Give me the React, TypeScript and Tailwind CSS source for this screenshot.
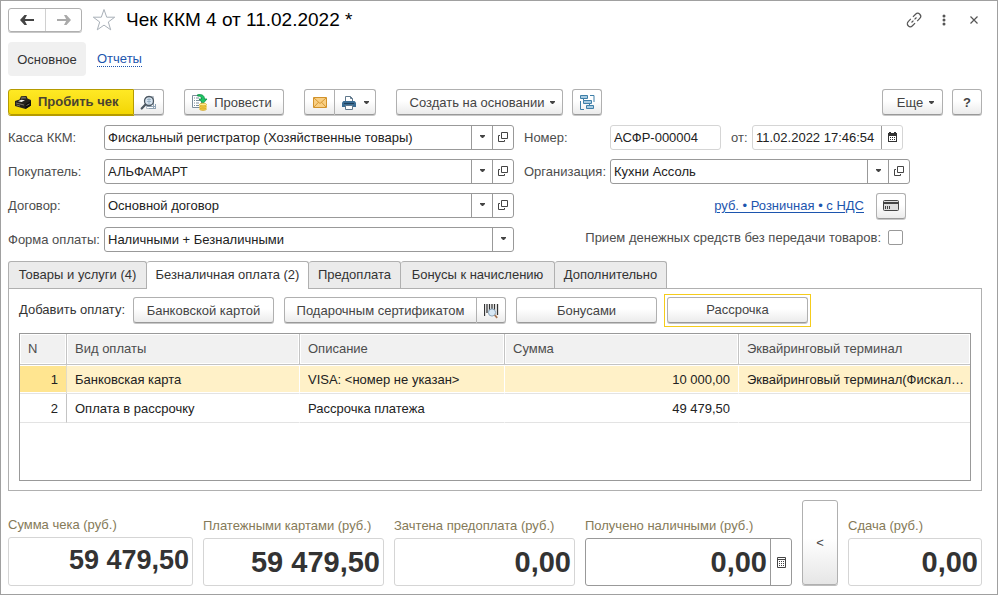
import type { ReactNode } from "react"
import { clsx } from "clsx"

const buttonStyle =
  "flex h-[26px] items-center justify-center rounded-[3px] border border-[#b0b0b0] border-b-[#999] bg-linear-to-b from-white from-45% to-[#ebebeb] pt-px text-[#444] shadow-[0_1px_0_#c8c8c8]"

const rows = [
  {
    n: 1,
    kind: "Банковская карта",
    description: "VISA: <номер не указан>",
    sum: "10 000,00",
    terminal: "Эквайринговый терминал(Фискал…",
  },
  {
    n: 2,
    kind: "Оплата в рассрочку",
    description: "Рассрочка платежа",
    sum: "49 479,50",
    terminal: "",
  },
]

const tabs = [
  { title: "Товары и услуги (4)", width: "w-[139px]" },
  { title: "Безналичная оплата (2)", width: "w-[162px]" },
  { title: "Предоплата", width: "w-[92px]" },
  { title: "Бонусы к начислению", width: "w-[154px]" },
  { title: "Дополнительно", width: "w-[112px]" },
]

function Caret() {
  return (
    <svg width="5" height="3" viewBox="0 0 5 3" fill="#444" aria-hidden="true">
      <path d="M0 0h5v1L3 3H2L0 1z" />
    </svg>
  )
}

function OpenIcon() {
  return (
    <svg width="10" height="10" viewBox="0 0 10 10" fill="none" stroke="#444" aria-hidden="true">
      <path d="M3.500.5h6v6h-6zM2 3.500H.5v6h6V8" />
    </svg>
  )
}

function ArrowIcon({ color, flip }: { color: string; flip?: boolean }) {
  return (
    <svg
      className={clsx(flip && "rotate-180")}
      width="14"
      height="10"
      viewBox="0 0 14 10"
      aria-hidden="true"
    >
      <path d="M4.500 0H7L4.900 3.900H14v2.200H4.900L7 10H4.500L0 5z" fill={color} />
    </svg>
  )
}

function StarIcon() {
  return (
    <svg width="24" height="24" viewBox="0 0 24 24" fill="none" stroke="#a9b0b8" aria-hidden="true">
      <path d="m12 1.500 2.700 7.700h8L16.300 14l2.400 7.800L12 17.100l-6.700 4.700L7.700 14 1.300 9.200h8z" />
    </svg>
  )
}

function LinkIcon() {
  return (
    <svg width="18" height="18" viewBox="0 0 18 18" fill="none" stroke="#555" strokeWidth="1.200" aria-hidden="true">
      <g transform="rotate(-45 9 9)">
        <path d="M7.500 6H3.800a3 3 0 0 0 0 6h3.700M10.500 6h3.700a3 3 0 0 1 0 6h-3.700M5.500 9h2.700M9.800 9h2.700" />
      </g>
    </svg>
  )
}

function RegisterIcon() {
  return (
    <svg width="16" height="13" viewBox="0 0 16 13" aria-hidden="true">
      <path d="m0 5 4.500-1.500L6 .3 11.500 0l1 2.500L16 4v5.500L10.500 13 0 10z" fill="#24221d" />
      <path d="m5.800 2.800.9-1.700 4-.2.5 1.500z" fill="#6d6a60" />
      <path d="m3 5.200 3.300-1.400 3.700.5-3.500 1.600z" fill="#f2f2ea" />
      <path d="m10.500 8 5.500-3v4.500L10.500 13z" fill="#0d0d0d" />
      <path d="m1 7 8 2M1.500 9l3.500 1M11.500 9.500l3-1.600" stroke="#8e8977" strokeWidth=".8" />
    </svg>
  )
}

function ReceiptSearchIcon() {
  return (
    <svg width="17" height="16" viewBox="0 0 17 16" fill="none" aria-hidden="true">
      <path d="M6.500 1.500h7v12h-7z" fill="#fff" stroke="#b4bdc6" />
      <path d="M7 11.500h8.500M9 13.500h6.500M13.500 8v6M15.500 9v5" stroke="#8fa2b3" />
      <circle cx="9" cy="6" r="4.500" fill="#d5e2ee" stroke="#4b5660" strokeWidth="1.300" />
      <path d="M7 4.500h4M7 6.500h4M9 3v6" stroke="#91a9bd" strokeWidth=".8" />
      <path d="m5.500 9.500-3.800 4" stroke="#4b5660" strokeWidth="2.200" strokeLinecap="round" />
    </svg>
  )
}

function PostIcon() {
  return (
    <svg width="16" height="17" viewBox="0 0 16 17" fill="none" aria-hidden="true">
      <path d="M.5 1.500h9v12h-9z" fill="#fff" stroke="#7d8d9b" />
      <path d="M2 4h1M2 6.500h1M2 9h1M2 11.500h1M4 4h3M4 6.500h4M4 9h3M4 11.500h3" stroke="#7d8d9b" />
      <path d="M5.500.8c4-.8 7 .5 7 4.200H15l-4 4.500L7 5h2.500c0-2-1-3-4-3z" fill="#1fc566" stroke="#0c8e43" strokeWidth=".8" />
      <path d="M7.500 10.500v4.800c1.500 1.200 5 1.200 7 0v-4.800z" fill="#f6d352" />
      <ellipse cx="11" cy="10.500" rx="3.500" ry="1.300" fill="#ffec8f" stroke="#d0a41c" strokeWidth=".7" />
      <path d="M7.500 12.300c2 1.200 5 1.200 7 0M7.500 14c2 1.200 5 1.200 7 0M7.500 15.500c2 1.200 5 1.200 7 0" stroke="#d0a41c" strokeWidth=".8" />
    </svg>
  )
}

function MailIcon() {
  return (
    <svg width="14" height="11" viewBox="0 0 14 11" fill="none" aria-hidden="true">
      <path d="M.5.5h13v10H.5z" fill="#f9cf83" stroke="#d1922b" />
      <path d="m1 1 6 5.500L13 1M1 10l4.500-4.800M13 10 8.500 5.200" stroke="#d1922b" strokeWidth=".9" />
    </svg>
  )
}

function PrinterIcon() {
  return (
    <svg width="14" height="14" viewBox="0 0 14 14" fill="none" aria-hidden="true">
      <path d="M3.500 5V.5h5l2 2V5" fill="#fff" stroke="#60788c" />
      <path d="M8.500.5v2h2" stroke="#60788c" />
      <path d="M1.500 5h11L14 6.500V11H0V6.500z" fill="#3b6d94" />
      <path d="M2 7.500h10" stroke="#1d3f5c" />
      <path d="M3.500 9.500h7v4h-7z" fill="#fff" stroke="#60788c" />
    </svg>
  )
}

function StructureIcon() {
  return (
    <svg width="15" height="15" viewBox="0 0 15 15" fill="none" stroke="#3f7fa8" aria-hidden="true">
      <path d="M.5.5h7v3h-7zM3.500 5.500h8v3h-8zM6.500 10.500h7v3h-7z" fill="#a9cce2" />
      <path d="M3.500 3.500v2M9.500 8.500v2M10 .5h4V7M.5 6v8.500H4" />
    </svg>
  )
}

function CalendarIcon() {
  return (
    <svg width="9" height="10" viewBox="0 0 9 10" aria-hidden="true">
      <path fill="#333" fillRule="evenodd" d="M0 1h1V0h2v1h3V0h2v1h1v9H0zM1 4v5h7V4z" />
      <path stroke="#333" d="M2 5.500h1m1 0h1m1 0h1M2 7.500h1m1 0h1m1 0h1" />
    </svg>
  )
}

function CalculatorIcon() {
  return (
    <svg width="9" height="11" viewBox="0 0 9 11" fill="none" stroke="#444" aria-hidden="true">
      <path d="M.5.5h8v10h-8zM0 2.500h9" />
      <path d="M2 4.500h1m1 0h1m1 0h1M2 6.500h1m1 0h1m1 0h1M2 8.500h1m1 0h1m1 0h1" />
    </svg>
  )
}

function CardIcon() {
  return (
    <svg width="16" height="12" viewBox="0 0 16 12" fill="none" aria-hidden="true">
      <rect x=".5" y=".5" width="15" height="10" rx="1" fill="#ddd" stroke="#444" />
      <path d="M1 3h14" stroke="#444" strokeWidth="2" />
      <path d="M2.500 6v3M4.500 6v3M6.500 6v3" stroke="#444" />
    </svg>
  )
}

function BarcodeIcon() {
  return (
    <svg width="15" height="16" viewBox="0 0 15 16" fill="none" aria-hidden="true">
      <path d="M.5 1v12M3 1v9M5.500 1v7M8 1v5M10.500 1v6M13.500 1v11" stroke="#333" strokeWidth="1.300" />
      <circle cx="8" cy="9.500" r="3.600" fill="#d8e8f5" stroke="#8ba5bb" />
      <path d="m10.700 12 2.500 2.800" stroke="#a77756" strokeWidth="1.800" />
    </svg>
  )
}

type ComboProps = {
  id: string
  label: string
  value: string
  open?: boolean
  wide?: boolean
}

function Combo({ id, label, value, open = true, wide }: ComboProps) {
  return (
    <div className="flex items-center">
      <label
        htmlFor={id}
        className={clsx("shrink-0 whitespace-nowrap", wide ? "w-24" : "w-[86px]")}
      >
        {label}
      </label>
      <div className="flex h-[25px] min-w-0 flex-1 rounded-[3px] border border-[#999]">
        <select id={id} className="min-w-0 flex-1 appearance-none bg-transparent pl-[3px] text-[#222] outline-none">
          <option>{value}</option>
        </select>
        <span className="pointer-events-none flex w-[21px] items-center justify-center border-l border-[#999] pb-0.5">
          <Caret />
        </span>
        {open ? (
          <button
            type="button"
            aria-label="Открыть"
            className="flex w-[21px] items-center justify-center border-l border-[#999] pb-0.5"
          >
            <OpenIcon />
          </button>
        ) : null}
      </div>
    </div>
  )
}

type TotalProps = {
  id: string
  label: string
  value: string
  className: string
  main?: boolean
  editable?: boolean
  children?: ReactNode
}

function Total({ id, label, value, className, main, editable, children }: TotalProps) {
  return (
    <div className={clsx("min-w-0", className)}>
      <label htmlFor={id} className="mb-1 block whitespace-nowrap text-[#857a58]">
        {label}
      </label>
      <div
        className={clsx(
          "flex rounded-[3px] border",
          main ? "h-[49px]" : "h-12",
          editable ? "border-[#999]" : "border-[#d5d5d5]"
        )}
      >
        <input
          id={id}
          className={clsx(
            "min-w-0 flex-1 bg-transparent pr-[3px] text-right font-bold text-[#333] outline-none",
            main ? "pb-0.5 text-[27px]" : "text-[29px]"
          )}
          defaultValue={value}
          readOnly={!editable}
        />
        {children}
      </div>
    </div>
  )
}

export default function App() {
  return (
    <main className="flex min-h-screen flex-col border border-[#a0a0a0] bg-white px-[7px] pt-1.5 pb-2 font-['Liberation_Sans',Arial,sans-serif] text-[13px] leading-4 text-[#4d4d4d]">
      <header className="flex h-[25px] items-center">
        <div className="flex h-6 rounded-[3px] border border-[#b0b0b0] shadow-[0_1px_0_#c8c8c8]">
          <button aria-label="Назад" className="flex w-9 items-center justify-center">
            <ArrowIcon color="#444" />
          </button>
          <button aria-label="Вперед" className="flex w-9 items-center justify-center border-l border-[#d0d0d0]">
            <ArrowIcon color="#aaa" flip />
          </button>
        </div>
        <button aria-label="В избранное" className="ml-2.5">
          <StarIcon />
        </button>
        <h1 className="ml-2.5 text-[19px] leading-6 text-black">Чек ККМ 4 от 11.02.2022 *</h1>
        <div className="mr-px ml-auto flex items-center">
          <button aria-label="Ссылка" className="flex w-[30px] justify-center">
            <LinkIcon />
          </button>
          <button aria-label="Меню" className="flex w-[30px] justify-center">
            <svg width="4" height="12" viewBox="0 0 4 12" fill="#555">
              <circle cx="2" cy="2" r="1.500" />
              <circle cx="2" cy="6" r="1.500" />
              <circle cx="2" cy="10" r="1.500" />
            </svg>
          </button>
          <button aria-label="Закрыть" className="flex w-[30px] justify-center">
            <svg width="8" height="8" viewBox="0 0 8 8" stroke="#555" strokeWidth="1.200">
              <path d="m.5.5 7 7m0-7-7 7" />
            </svg>
          </button>
        </div>
      </header>

      <nav className="mt-2.5 flex h-[34px] items-center">
        <a href="#main" className="flex h-full w-[78px] items-center justify-center rounded-[4px] bg-[#f0f0f0] pt-px text-[#333]">
          Основное
        </a>
        <a href="#reports" className="ml-[11px] border-b border-dotted border-[#1c55ae] leading-[14px] text-[#1c55ae]">
          Отчеты
        </a>
      </nav>

      <div className="mt-[13px] flex">
        <div className="flex">
          <button className="flex h-[26px] w-[126px] items-center rounded-l-[3px] border border-[#b59b00] bg-linear-to-b from-[#ffe924] to-[#f3d600] pl-1.5 font-bold text-[#4a4330] shadow-[0_1px_0_#b59b00]">
            <RegisterIcon />
            <span className="ml-[7px]">Пробить чек</span>
          </button>
          <button aria-label="Просмотр чека" className={clsx(buttonStyle, "w-[30px] rounded-l-none border-l-0")}>
            <ReceiptSearchIcon />
          </button>
        </div>
        <button className={clsx(buttonStyle, "ml-5 w-[100px] gap-1.5 pr-1")}>
          <PostIcon />
          Провести
        </button>
        <div className="ml-5 flex">
          <button aria-label="Отправить" className={clsx(buttonStyle, "w-[31px] rounded-r-none")}>
            <MailIcon />
          </button>
          <button aria-label="Печать" className={clsx(buttonStyle, "w-[41px] gap-2 rounded-l-none border-l-0")}>
            <PrinterIcon />
            <Caret />
          </button>
        </div>
        <button className={clsx(buttonStyle, "ml-5 w-[167px] gap-1.5 pl-1.5 whitespace-nowrap")}>
          Создать на основании
          <Caret />
        </button>
        <button aria-label="Структура подчиненности" className={clsx(buttonStyle, "ml-[9px] w-[30px]")}>
          <StructureIcon />
        </button>
        <div className="mr-2 ml-auto flex gap-[9px]">
          <button className={clsx(buttonStyle, "w-[61px] gap-1.5 pl-1.5")}>
            Еще
            <Caret />
          </button>
          <button aria-label="Справка" className={clsx(buttonStyle, "w-[30px] font-bold")}>
            ?
          </button>
        </div>
      </div>

      <form className="mt-2.5 mr-2 grid grid-cols-[506fr_458fr] gap-x-2.5">
        <div className="flex flex-col gap-[9px]">
          <Combo id="kkm" label="Касса ККМ:" value="Фискальный регистратор (Хозяйственные товары)" wide />
          <Combo id="buyer" label="Покупатель:" value="АЛЬФАМАРТ" wide />
          <Combo id="contract" label="Договор:" value="Основной договор" wide />
          <Combo id="payment" label="Форма оплаты:" value="Наличными + Безналичными" open={false} wide />
        </div>
        <div className="flex flex-col gap-[9px] pr-[72px]">
          <div className="flex h-[25px] items-center">
            <label htmlFor="number" className="w-[86px] shrink-0">
              Номер:
            </label>
            <input
              id="number"
              defaultValue="АСФР-000004"
              className="h-full w-[111px] rounded-[3px] border border-[#d5d5d5] pl-[3px] text-[#222] outline-none"
            />
            <label htmlFor="date" className="ml-2.5 w-[21px] shrink-0">
              от:
            </label>
            <div className="flex h-full w-[151px] rounded-[3px] border border-[#d5d5d5]">
              <input id="date" defaultValue="11.02.2022 17:46:54" className="min-w-0 flex-1 pl-[3px] text-[#222] outline-none" />
              <button
                type="button"
                aria-label="Выбрать дату"
                className="flex w-[21px] items-center justify-center border-l border-[#999] pb-0.5"
              >
                <CalendarIcon />
              </button>
            </div>
          </div>
          <Combo id="company" label="Организация:" value="Кухни Ассоль" />
          <div className="flex h-[25px] items-center justify-end pr-1">
            <a href="#prices" className="mr-3 text-[#1c55ae] underline underline-offset-2">
              руб. • Розничная • с НДС
            </a>
            <button type="button" aria-label="Карта" className={clsx(buttonStyle, "w-[30px]")}>
              <CardIcon />
            </button>
          </div>
          <div className="flex h-[21px] items-center justify-end gap-[7px] pr-[7px]">
            <label htmlFor="advance" className="whitespace-nowrap">
              Прием денежных средств без передачи товаров:
            </label>
            <input id="advance" type="checkbox" className="size-[15px] appearance-none rounded-[2px] border border-[#999]" />
          </div>
        </div>
      </form>

      <div role="tablist" className="mt-[9px] flex">
        {tabs.map((tab, i) => (
          <button
            key={tab.title}
            role="tab"
            aria-selected={i === 1}
            className={clsx(
              "rounded-t-[3px] border-t border-r border-[#b0b0b0] pb-px text-center whitespace-nowrap text-[#333]",
              tab.width,
              i === 0 && "border-l",
              i === 1 ? "z-10 -mb-px h-7 bg-white" : "h-[27px] bg-[#ebebeb]"
            )}
          >
            {tab.title}
          </button>
        ))}
      </div>

      <section className="mr-2 flex flex-1 flex-col border border-[#b0b0b0] px-2.5 pt-2 pb-[9px]">
        <div className="flex items-center">
          <span className="w-[114px] text-[#333]">Добавить оплату:</span>
          <button className={clsx(buttonStyle, "w-[141px]")}>Банковской картой</button>
          <button className={clsx(buttonStyle, "ml-2.5 w-[193px] rounded-r-none")}>Подарочным сертификатом</button>
          <button aria-label="Найти по штрихкоду" className={clsx(buttonStyle, "w-[29px] rounded-l-none border-l-0")}>
            <BarcodeIcon />
          </button>
          <button className={clsx(buttonStyle, "ml-2.5 w-[141px]")}>Бонусами</button>
          <div className="-my-1 ml-[7px] border border-[#f5cc1b] p-0.5 pb-[3px]">
            <button className={clsx(buttonStyle, "w-[141px]")}>Рассрочка</button>
          </div>
        </div>
        <div className="mt-2.5 min-h-[148px] flex-1 border border-[#999]">
          <table className="w-full table-fixed border-separate border-spacing-0 text-left">
            <colgroup>
              <col className="w-[47px]" />
              <col className="w-[233px]" />
              <col className="w-[205px]" />
              <col className="w-[234px]" />
              <col />
            </colgroup>
            <thead>
              <tr className="h-[31px]">
                {["N", "Вид оплаты", "Описание", "Сумма", "Эквайринговый терминал"].map((name) => (
                  <th
                    key={name}
                    className="border-r border-b border-[#c4c4c4] bg-[#f1f1f1] px-2 font-normal shadow-[inset_0_0_0_1px_#fff] last:border-r-0"
                  >
                    {name}
                  </th>
                ))}
              </tr>
            </thead>
            <tbody className="text-[#222]">
              {rows.map((row) => (
                <tr
                  key={row.n}
                  className={clsx(
                    "h-[29px] *:border-b *:border-b-[#e3e3e3] *:pt-px *:pl-2",
                    row.n === 1 && "bg-[#fff1c8] *:shadow-[inset_0_1px_0_#fff,inset_0_-1px_0_#fff]"
                  )}
                >
                  <td
                    className={clsx(
                      "border-r pr-2 text-right",
                      row.n === 1 ? "border-r-[#e2dcc8] bg-[#ffe590]" : "border-r-[#c4c4c4]"
                    )}
                  >
                    {row.n}
                  </td>
                  <td className="border-r border-r-white">{row.kind}</td>
                  <td className="border-r border-r-white">{row.description}</td>
                  <td className="border-r border-r-white pr-2 text-right">{row.sum}</td>
                  <td className="whitespace-nowrap">{row.terminal}</td>
                </tr>
              ))}
            </tbody>
          </table>
        </div>
      </section>

      <footer className="mt-[9px] mr-2 flex items-end gap-2.5">
        <Total id="total" label="Сумма чека (руб.)" value="59 479,50" className="flex-[185]" main />
        <Total id="cards" label="Платежными картами (руб.)" value="59 479,50" className="flex-[181]" />
        <Total id="prepaid" label="Зачтена предоплата (руб.)" value="0,00" className="flex-[181]" />
        <Total id="cash" label="Получено наличными (руб.)" value="0,00" className="flex-[207]" editable>
          <button aria-label="Калькулятор" className="flex w-[21px] items-center justify-center border-l border-[#999]">
            <CalculatorIcon />
          </button>
        </Total>
        <button
          aria-label="Перенести сумму"
          className="mb-px h-[85px] w-9 rounded-[3px] border border-[#b0b0b0] bg-linear-to-b from-white from-45% to-[#e6e6e6] text-[#444] shadow-[0_1px_0_#bdbdbd]"
        >
          &lt;
        </button>
        <Total id="change" label="Сдача (руб.)" value="0,00" className="flex-[134]" />
      </footer>
    </main>
  )
}
